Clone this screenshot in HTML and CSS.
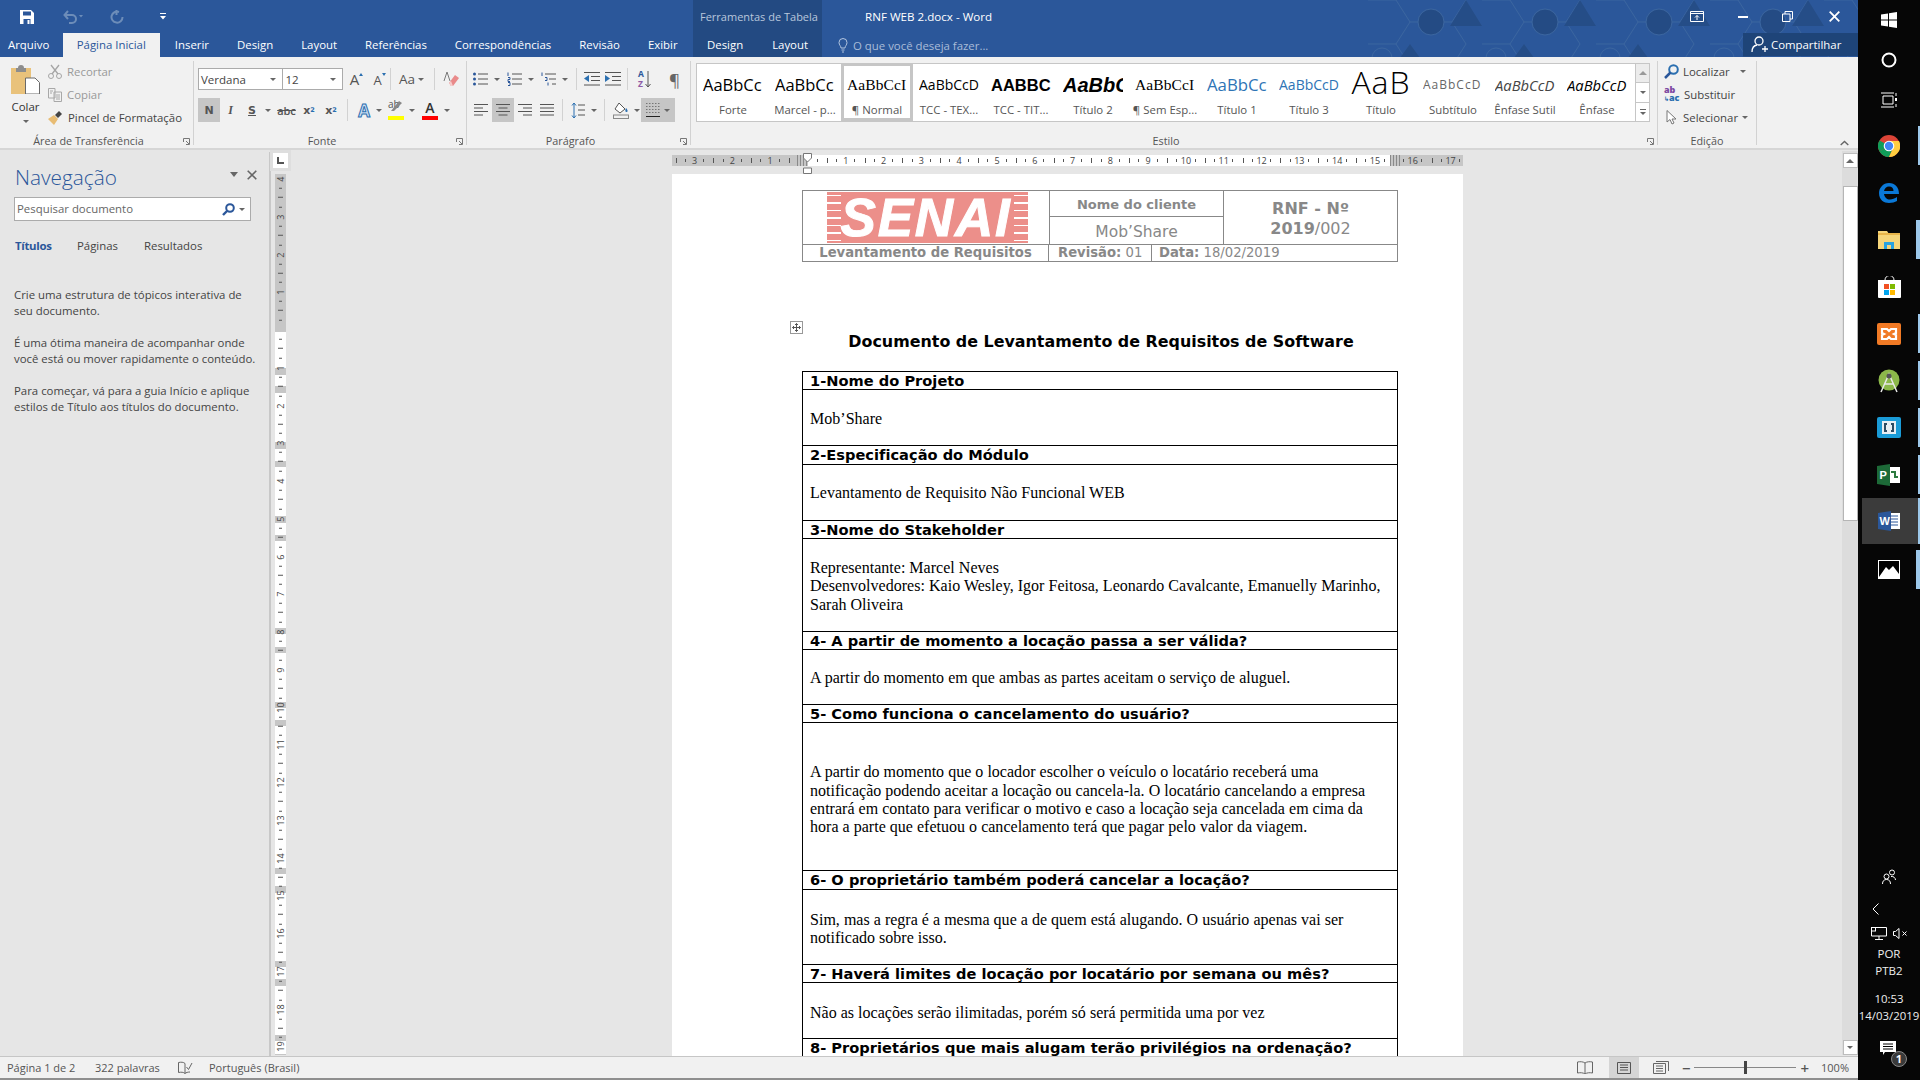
FILE: index.html
```html
<!DOCTYPE html>
<html lang="pt-BR">
<head>
<meta charset="utf-8">
<title>RNF WEB 2.docx - Word</title>
<link rel="stylesheet" href="styles.css">
</head>
<body>
<div class="app">
<div class="main">
  <header class="titlebar">
    <svg class="pattern" width="490" height="57"><defs><pattern id="hx" width="114" height="66" patternUnits="userSpaceOnUse"><path d="M0 0L28 0L42 22L28 44L0 44M28 0L42-22M42 22L84 22L98 0M84 22L98 44L84 66M28 44L42 66" fill="none" stroke="#3a659f" stroke-width="1"/><circle cx="63" cy="22" r="13" fill="#244b84" stroke="#3a659f"/><path d="M98 0L114 26L82 26Z" fill="#254d87"/><circle cx="14" cy="58" r="10" fill="none" stroke="#3a659f"/><path d="M42 44L58 66L26 66Z" fill="#254d87"/></pattern></defs><rect width="490" height="57" fill="url(#hx)"/></svg>
    <div class="tb-row1">
      <div class="qat">
        <svg class="q-save" width="14" height="14" viewBox="0 0 14 14"><path d="M0 0H11L14 3V14H0Z" fill="#fff"/><rect x="3" y="1.500" width="8" height="4" fill="#2b579a"/><rect x="3.500" y="9" width="7" height="5" fill="#2b579a"/><rect x="7.500" y="10" width="2" height="4" fill="#fff"/></svg>
        <svg class="q-undo" width="20" height="14" viewBox="0 0 20 14"><path d="M2 5H9A4 4 0 0 1 9 13H6M5 1L1.500 5L5 9" fill="none" stroke="#6d8db9" stroke-width="2"/><path d="M16 5H20L18 7.500Z" fill="#6d8db9"/></svg>
        <svg class="q-redo" width="14" height="15" viewBox="0 0 14 15"><path d="M9 3A5.500 5.500 0 1 0 12.500 8M6.500 1V6" fill="none" stroke="#6d8db9" stroke-width="2"/></svg>
        <svg class="q-more" width="6" height="7" viewBox="0 0 6 7"><path d="M0 0H6V1H0ZM0 3H6L3 6.500Z" fill="#fff"/></svg>
      </div>
      <div class="ctx ctx-top">Ferramentas de Tabela</div>
      <div class="doc-title">RNF WEB 2.docx - Word</div>
      <div class="winbtns">
        <svg width="14" height="11" viewBox="0 0 14 11"><path d="M.5.500H13.500V10.500H.5ZM.5 2.500H13.500M7 9V4.500M5 6.500L7 4.500L9 6.500" fill="none" stroke="#fff"/></svg>
        <svg class="w-min" width="10" height="2" viewBox="0 0 10 2"><rect width="10" height="2" fill="#fff"/></svg>
        <svg class="w-max" width="11" height="11" viewBox="0 0 11 11"><path d="M.5 3H8V10.500H.5ZM3 3V.5H10.500V8H8" fill="none" stroke="#fff"/></svg>
        <svg class="w-x" width="11" height="11" viewBox="0 0 11 11"><path d="M.7.700L10.300 10.300M10.300.700L.7 10.300" stroke="#fff" stroke-width="1.800"/></svg>
      </div>
    </div>
    <nav class="tb-row2">
      <div class="tabs">
        <span class="tab file">Arquivo</span>
        <span class="tab active">Página Inicial</span>
        <span class="tab">Inserir</span>
        <span class="tab">Design</span>
        <span class="tab">Layout</span>
        <span class="tab">Referências</span>
        <span class="tab">Correspondências</span>
        <span class="tab">Revisão</span>
        <span class="tab">Exibir</span>
      </div>
      <div class="ctx ctx-tabs"><span class="tab">Design</span><span class="tab">Layout</span></div>
      <div class="tell">
        <svg width="10" height="15" viewBox="0 0 10 15"><path d="M3 10C3 8 1 7 1 4.500A4 4 0 0 1 9 4.500C9 7 7 8 7 10ZM3.500 12H6.500M4 14H6" fill="none" stroke="#b3c5df"/></svg>
        <span>O que você deseja fazer...</span>
      </div>
      <div class="share">
        <svg width="17" height="17" viewBox="0 0 17 17"><circle cx="8" cy="5" r="4" fill="none" stroke="#fff" stroke-width="1.300"/><path d="M1 16C1 12 3 9.500 6 9M11 13H17M14 10V16" fill="none" stroke="#fff" stroke-width="1.300"/></svg>
        <span>Compartilhar</span>
      </div>
    </nav>
  </header>

  <section class="ribbon">
    <div class="group g-clip">
      <div class="g-body clip">
        <div class="paste">
          <svg width="29" height="29" viewBox="0 0 29 29"><rect y="3" width="20" height="26" fill="#e9c27b"/><path d="M5 3H7A3 3 0 0 1 13 3H15V7H5Z" fill="#8d8d8d"/><path d="M14.500 13H24L28.500 17.500V29H14.500Z" fill="#fff" stroke="#6a6a6a"/></svg>
          <span class="paste-l">Colar</span>
          <i class="car"></i>
        </div>
        <div class="clip-list">
          <div class="cl dis"><svg width="14" height="15" viewBox="0 0 14 15"><path d="M3 1L10 10M11 1L4 10" stroke="#a5a5a5" stroke-width="1.300"/><circle cx="3" cy="12" r="2.500" fill="none" stroke="#a5a5a5"/><circle cx="11" cy="12" r="2.500" fill="none" stroke="#a5a5a5"/></svg><span>Recortar</span></div>
          <div class="cl dis"><svg width="14" height="14" viewBox="0 0 14 14"><path d="M.5.500H7V10H.5ZM6 4H13.500V13.500H6ZM8 7H12M8 9H12M8 11H12M2 3H5M2 5H4" fill="#f1f1f1" stroke="#a8a8a8"/></svg><span>Copiar</span></div>
          <div class="cl"><svg width="15" height="15" viewBox="0 0 15 15"><path d="M0 9L6 5L10 9L6 15Z" fill="#e8bc73"/><path d="M7 5L11 1L14 4L10 8Z" fill="#444"/></svg><span>Pincel de Formatação</span></div>
        </div>
      </div>
      <div class="g-label">Área de Transferência<svg class="launch" width="7" height="7" viewBox="0 0 7 7"><path d="M.5 4V.5H6.500V6.500H3M3 3L6 6" fill="none" stroke="#777"/></svg></div>
    </div>

    <div class="group g-font">
      <div class="g-body rows">
        <div class="row">
          <div class="select s-font"><span>Verdana</span><i class="car"></i></div>
          <div class="select s-size"><span>12</span><i class="car"></i></div>
          <span class="ib w23 big">A<i class="up"></i></span>
          <span class="ib w23 mid">A<i class="dn"></i></span>
          <i class="vsep"></i>
          <span class="ib w41 aa">Aa<i class="car"></i></span>
          <i class="vsep"></i>
          <span class="ib w30"><svg width="16" height="17" viewBox="0 0 16 17"><path d="M4 1L1 10M4 1L7 10" fill="none" stroke="#7a7a7a"/><path d="M6 12L12 4L16 7L10 15H8Z" fill="#e98a8a"/><path d="M6 12L8 15H10L8 10Z" fill="#f6cccc"/></svg></span>
        </div>
        <div class="row">
          <span class="ib w22 on fb">N</span>
          <span class="ib w21 fi">I</span>
          <span class="ib w22 fu">S</span><i class="car c10"></i>
          <span class="ib w23 fabc">abc</span>
          <span class="ib w22 fb">x<sub>2</sub></span>
          <span class="ib w22 fb">x<sup>2</sup></span>
          <i class="vsep v4"></i>
          <span class="ib w22 fa-blue">A</span><i class="car c6"></i>
          <span class="ib w24"><span class="hl"><em>ab</em><svg width="16" height="14" viewBox="0 0 16 14"><path d="M3 11L11 1L14 3L6 11Z" fill="#888"/></svg></span></span><i class="car c6"></i>
          <span class="ib w26"><span class="fc">A</span></span><i class="car c8"></i>
        </div>
      </div>
      <div class="g-label">Fonte<svg class="launch" width="7" height="7" viewBox="0 0 7 7"><path d="M.5 4V.5H6.500V6.500H3M3 3L6 6" fill="none" stroke="#777"/></svg></div>
    </div>

    <div class="group g-para">
      <div class="g-body rows">
        <div class="row">
          <span class="ib w22"><svg width="16" height="14" viewBox="0 0 16 14"><path d="M5 2H15M5 7H15M5 12H15" stroke="#555"/><circle cx="1.500" cy="2" r="1.500" fill="#2b579a"/><circle cx="1.500" cy="7" r="1.500" fill="#2b579a"/><circle cx="1.500" cy="12" r="1.500" fill="#2b579a"/></svg></span><i class="car c10"></i>
          <span class="ib w22"><svg width="16" height="14" viewBox="0 0 16 14"><path d="M5 2H15M5 7H15M5 12H15" stroke="#555"/><path d="M1 .5V4M1 5.500H3V7.500H1V9.500H3M1 10.500H3V13.500H1" fill="none" stroke="#2b579a"/></svg></span><i class="car c10"></i>
          <span class="ib w22"><svg width="16" height="14" viewBox="0 0 16 14"><path d="M4 2H15M8 7H15M11 12H15" stroke="#555"/><path d="M1 .5V4M4 5.500H6V8.500H4M7 10.500V13.500" fill="none" stroke="#2b579a"/></svg></span><i class="car c10"></i>
          <i class="vsep v-w"></i>
          <span class="ib w21"><svg width="16" height="14" viewBox="0 0 16 14"><path d="M0 .5H16M7 4.500H16M7 8.500H16M0 13H16" stroke="#555"/><path d="M0 6.500L5 3V10Z" fill="#2b6fb0"/></svg></span>
          <span class="ib w21"><svg width="16" height="14" viewBox="0 0 16 14"><path d="M0 .5H16M7 4.500H16M7 8.500H16M0 13H16" stroke="#555"/><path d="M5 6.500L0 3V10Z" fill="#2b6fb0"/></svg></span>
          <i class="vsep v-w"></i>
          <span class="ib w30 az"><span class="az-l"><b>A</b><b class="z">Z</b></span><svg width="6" height="17" viewBox="0 0 6 17"><path d="M3 0V16M.5 13L3 16L5.500 13" fill="none" stroke="#555"/></svg></span>
          <span class="ib w30 pil">¶</span>
        </div>
        <div class="row">
          <span class="ib w22"><svg width="14" height="12" viewBox="0 0 14 12"><path d="M0 .5H14M0 4H9M0 7.500H14M0 11H9" stroke="#555"/></svg></span>
          <span class="ib w22 on"><svg width="14" height="12" viewBox="0 0 14 12"><path d="M0 .5H14M2.500 4H11.500M0 7.500H14M2.500 11H11.500" stroke="#555"/></svg></span>
          <span class="ib w22"><svg width="14" height="12" viewBox="0 0 14 12"><path d="M0 .5H14M5 4H14M0 7.500H14M5 11H14" stroke="#555"/></svg></span>
          <span class="ib w22"><svg width="14" height="12" viewBox="0 0 14 12"><path d="M0 .5H14M0 4H14M0 7.500H14M0 11H14" stroke="#555"/></svg></span>
          <i class="vsep v-w"></i>
          <span class="ib w22"><svg width="14" height="17" viewBox="0 0 14 17"><path d="M7 3H14M7 8H14M7 13H14" stroke="#555"/><path d="M3 1V16M1 3.500L3 1L5 3.500M1 13.500L3 16L5 13.500" fill="none" stroke="#2b6fb0"/></svg></span><i class="car c10"></i>
          <i class="vsep v-m"></i>
          <span class="ib w26"><svg width="16" height="17" viewBox="0 0 16 17"><path d="M6 1L12 7L7 11L2 7Z" fill="#fff" stroke="#555"/><path d="M13 6C15 8 15 10 13.500 10C12 10 12 8 13 6Z" fill="#2b6fb0"/><rect x=".5" y="13" width="15" height="3.500" fill="#f1f1f1" stroke="#888"/></svg></span><i class="car c5"></i>
          <span class="ib bord on"><svg width="14" height="14" viewBox="0 0 14 14"><path d="M0 .5H14M0 3.500H14M0 6.500H14M0 9.500H14M1 0V10M4 0V10M7 0V10M10 0V10M13 0V10" stroke="#777" stroke-dasharray="1 2"/><path d="M0 13.500H14" stroke="#222"/></svg><i class="car"></i></span>
        </div>
      </div>
      <div class="g-label">Parágrafo<svg class="launch" width="7" height="7" viewBox="0 0 7 7"><path d="M.5 4V.5H6.500V6.500H3M3 3L6 6" fill="none" stroke="#777"/></svg></div>
    </div>

    <div class="group g-style">
      <div class="g-body">
        <div class="gallery">
          <div class="st"><span class="pv p-ss">AaBbCc</span><span class="lb">Forte</span></div>
          <div class="st"><span class="pv p-ss">AaBbCc</span><span class="lb">Marcel - p...</span></div>
          <div class="st sel"><span class="pv p-sf">AaBbCcI</span><span class="lb">¶ Normal</span></div>
          <div class="st"><span class="pv p-ss s13">AaBbCcD</span><span class="lb">TCC - TEX...</span></div>
          <div class="st"><span class="pv p-ss p-bold">AABBC</span><span class="lb">TCC - TIT...</span></div>
          <div class="st"><span class="pv p-ss p-t2">AaBbC</span><span class="lb">Título 2</span></div>
          <div class="st"><span class="pv p-sf">AaBbCcI</span><span class="lb">¶ Sem Esp...</span></div>
          <div class="st"><span class="pv p-ss p-t1">AaBbCc</span><span class="lb">Título 1</span></div>
          <div class="st"><span class="pv p-ss p-t3">AaBbCcD</span><span class="lb">Título 3</span></div>
          <div class="st"><span class="pv p-big">AaB</span><span class="lb">Título</span></div>
          <div class="st"><span class="pv p-ss p-sub">AaBbCcD</span><span class="lb">Subtítulo</span></div>
          <div class="st"><span class="pv p-ss p-em1">AaBbCcD</span><span class="lb">Ênfase Sutil</span></div>
          <div class="st"><span class="pv p-ss p-em2">AaBbCcD</span><span class="lb">Ênfase</span></div>
          <div class="gal-scroll">
            <span class="gs dis"><i class="tri-up"></i></span>
            <span class="gs"><i class="car"></i></span>
            <span class="gs more"><i class="bar"></i><i class="car"></i></span>
          </div>
        </div>
      </div>
      <div class="g-label">Estilo<svg class="launch" width="7" height="7" viewBox="0 0 7 7"><path d="M.5 4V.5H6.500V6.500H3M3 3L6 6" fill="none" stroke="#777"/></svg></div>
    </div>

    <div class="group g-edit">
      <div class="g-body edit">
        <div class="cl"><svg width="15" height="15" viewBox="0 0 15 15"><circle cx="9.500" cy="5.500" r="4.300" fill="none" stroke="#2b6fb0" stroke-width="2"/><path d="M1 14L6.500 8.500" stroke="#2b579a" stroke-width="2.500"/></svg><span>Localizar</span><i class="car c-l"></i></div>
        <div class="cl"><span class="abac"><b class="ab1">ab</b><b class="ac1"><u>↳</u>ac</b></span><span>Substituir</span></div>
        <div class="cl"><svg width="15" height="15" viewBox="0 0 15 15"><path d="M3 .5V12L6 9.500L8 14L10 13L8 9H12Z" fill="#fff" stroke="#777"/></svg><span>Selecionar</span><i class="car"></i></div>
      </div>
      <div class="g-label g-last">Edição</div>
    </div>
    <div class="collapse"><svg width="9" height="6" viewBox="0 0 9 6"><path d="M.7 5L4.500 1.500L8.300 5" fill="none" stroke="#666" stroke-width="1.400"/></svg></div>
  </section>

  <div class="work">
    <aside class="navpane">
      <div class="nav-head">
        <h1>Navegação</h1>
        <i class="nav-drop"></i>
        <svg width="10" height="10" viewBox="0 0 10 10"><path d="M.7.700L9.300 9.300M9.300.700L.7 9.300" stroke="#666" stroke-width="1.600"/></svg>
      </div>
      <div class="search">
        <span>Pesquisar documento</span>
        <svg width="13" height="13" viewBox="0 0 13 13"><circle cx="8" cy="5" r="3.800" fill="none" stroke="#2b579a" stroke-width="2"/><path d="M1 12L5 8" stroke="#2b579a" stroke-width="2.400"/></svg>
        <i class="car"></i>
      </div>
      <div class="nav-tabs"><span class="nt cur">Títulos</span><span class="nt">Páginas</span><span class="nt">Resultados</span></div>
      <p>Crie uma estrutura de tópicos interativa de seu documento.</p>
      <p>É uma ótima maneira de acompanhar onde você está ou mover rapidamente o conteúdo.</p>
      <p>Para começar, vá para a guia Início e aplique estilos de Título aos títulos do documento.</p>
    </aside>

    <div class="vcol">
      <div class="tabsel"><svg width="7" height="7" viewBox="0 0 7 7"><path d="M1 0V6H7" fill="none" stroke="#555" stroke-width="2"/></svg></div>
      <div class="vruler">
        <div class="vr-inner">
          <span class="vc">4</span><span class="vc">3</span><span class="vc">2</span><span class="vc">1</span><span class="vc"></span><span class="vc">1</span><span class="vc">2</span><span class="vc">3</span><span class="vc">4</span><span class="vc">5</span><span class="vc">6</span><span class="vc">7</span><span class="vc">8</span><span class="vc">9</span><span class="vc">10</span><span class="vc">11</span><span class="vc">12</span><span class="vc">13</span><span class="vc">14</span><span class="vc">15</span><span class="vc">16</span><span class="vc">17</span><span class="vc">18</span><span class="vc">19</span>
        </div>
      </div>
    </div>

    <div class="docarea">
      <div class="hruler">
        <span class="hc">3</span><span class="hc">2</span><span class="hc">1</span><span class="hc"></span><span class="hc">1</span><span class="hc">2</span><span class="hc">3</span><span class="hc">4</span><span class="hc">5</span><span class="hc">6</span><span class="hc">7</span><span class="hc">8</span><span class="hc">9</span><span class="hc">10</span><span class="hc">11</span><span class="hc">12</span><span class="hc">13</span><span class="hc">14</span><span class="hc">15</span><span class="hc">16</span><span class="hc">17</span>
        <i class="colmark cm1"></i><i class="colmark cm2"></i>
        <svg class="indent" width="9" height="21" viewBox="0 0 9 21"><path d="M.5.500H8.500V5L4.500 9L.5 5Z" fill="#fff" stroke="#777"/><path d="M.5 15H8.500V20.500H.5Z" fill="#fff" stroke="#777"/></svg>
      </div>
      <div class="page">
        <table class="hdr">
          <tr>
            <td class="logo-cell" rowspan="2">
              <div class="logo"><i class="st-l"></i><span>SENAI</span><i class="st-r"></i></div>
            </td>
            <td class="c-name">Nome do cliente</td>
            <td class="c-rnf" rowspan="2"><b>RNF - Nº</b><br><b>2019</b>/002</td>
          </tr>
          <tr><td class="c-mob">Mob’Share</td></tr>
        </table>
        <div class="hdr2">
          <div class="h2a">Levantamento de Requisitos</div>
          <div class="h2b"><b>Revisão:</b> 01</div>
          <div class="h2c"><b>Data:</b> 18/02/2019</div>
        </div>
        <h2 class="doc-h">Documento de Levantamento de Requisitos de Software</h2>
        <div class="tbl-wrap">
          <svg class="move" width="13" height="13" viewBox="0 0 13 13"><rect x=".5" y=".5" width="12" height="12" fill="#fff" stroke="#999"/><path d="M6.500 2.500V10.500M2.500 6.500H10.500M5 4L6.500 2.500L8 4M5 9L6.500 10.500L8 9M4 5L2.500 6.500L4 8M9 5L10.500 6.500L9 8" fill="none" stroke="#555"/></svg>
          <table class="req">
            <tr><th>1-Nome do Projeto</th></tr>
            <tr><td class="r56">Mob’Share</td></tr>
            <tr><th>2-Especificação do Módulo</th></tr>
            <tr><td class="r56">Levantamento de Requisito Não Funcional WEB</td></tr>
            <tr><th>3-Nome do Stakeholder</th></tr>
            <tr><td class="r93">Representante: Marcel Neves<br>Desenvolvedores: Kaio Wesley, Igor Feitosa, Leonardo Cavalcante, Emanuelly Marinho, Sarah Oliveira</td></tr>
            <tr><th>4- A partir de momento a locação passa a ser válida?</th></tr>
            <tr><td class="r55">A partir do momento em que ambas as partes aceitam o serviço de aluguel.</td></tr>
            <tr><th>5- Como funciona o cancelamento do usuário?</th></tr>
            <tr><td class="r148">A partir do momento que o locador escolher o veículo o locatário receberá uma notificação podendo aceitar a locação ou cancela-la. O locatário cancelando a empresa entrará em contato para verificar o motivo e caso a locação seja cancelada em cima da hora a parte que efetuou o cancelamento terá que pagar pelo valor da viagem.</td></tr>
            <tr><th>6- O proprietário também poderá cancelar a locação?</th></tr>
            <tr><td class="r75">Sim, mas a regra é a mesma que a de quem está alugando. O usuário apenas vai ser notificado sobre isso.</td></tr>
            <tr><th>7- Haverá limites de locação por locatário por semana ou mês?</th></tr>
            <tr><td class="r56 r-low">Não as locações serão ilimitadas, porém só será permitida uma por vez</td></tr>
            <tr><th>8- Proprietários que mais alugam terão privilégios na ordenação?</th></tr>
          </table>
        </div>
      </div>
    </div>

    <div class="vscroll">
      <span class="sb-btn"><i class="tri-up"></i></span>
      <span class="sb-thumb"></span>
      <span class="sb-btn sb-dn"><i class="car"></i></span>
    </div>
  </div>

  <footer class="status">
    <span class="s1">Página 1 de 2</span>
    <span class="s2">322 palavras</span>
    <svg class="s3" width="15" height="14" viewBox="0 0 15 14"><path d="M7 2.500C5.500 1 3 1 .5 1.500V11.500C3 11 5.500 11 7 12.500V2.500ZM7 12.500C8 11.500 10 11 12 11M8.500 6L10.500 8.500L14 2" fill="none" stroke="#666"/></svg>
    <span class="s4">Português (Brasil)</span>
    <div class="s-right">
      <svg width="16" height="13" viewBox="0 0 16 13"><path d="M8 2C6 .5 3 .5 .5 1V12C3 11.500 6 11.500 8 13C10 11.500 13 11.500 15.500 12V1C13 .5 10 .5 8 2ZM8 2V13" fill="none" stroke="#666"/></svg>
      <span class="view-on"><svg width="14" height="12" viewBox="0 0 14 12"><path d="M.5.500H13.500V11.500H.5ZM3 3H11M3 5.500H11M3 8H11" fill="none" stroke="#555"/></svg></span>
      <svg width="16" height="13" viewBox="0 0 16 13"><path d="M.5 2.500H12.500V12.500H.5ZM3 .5H15.500V10M3 5H10M3 7.500H10M3 10H10" fill="none" stroke="#666"/></svg>
      <span class="zm zm-m">−</span>
      <span class="slider"><i></i></span>
      <span class="zm">+</span>
      <span class="pct">100%</span>
    </div>
  </footer>
  <div class="bottomline"></div>
</div>

<aside class="taskbar">
  <span class="ti t39"><svg width="16" height="16" viewBox="0 0 16 16"><path d="M0 2.500L7 1.500V7.500H0ZM8 1.300L16 0V7.500H8ZM0 8.500H7V14.500L0 13.500ZM8 8.500H16V16L8 14.700Z" fill="#fff"/></svg></span>
  <span class="ti t39"><svg width="16" height="16" viewBox="0 0 16 16"><circle cx="8" cy="8" r="6.500" fill="none" stroke="#fff" stroke-width="2"/></svg></span>
  <span class="ti t40"><svg width="16" height="16" viewBox="0 0 16 16"><path d="M0 1H13M0 15H13M2 4H12V12H2ZM15 1V4M15 12V15" fill="none" stroke="#fff"/><rect x="14" y="6" width="2" height="3" fill="#fff"/></svg></span>
  <span class="ti t47 run"><svg width="22" height="22" viewBox="0 0 22 22"><circle cx="11" cy="11" r="11" fill="#db4437"/><path d="M11 11L1.500 16.500A11 11 0 0 1 1.500 5.500L6 8Z" fill="#0f9d58"/><path d="M11 11L1.500 16.500A11 11 0 0 0 11 22L16 11Z" fill="#0f9d58"/><path d="M11 6H21A11 11 0 0 1 11 22L16 11Z" fill="#ffcd40"/><circle cx="11" cy="11" r="5.300" fill="#fff"/><circle cx="11" cy="11" r="4.200" fill="#4285f4"/></svg></span>
  <span class="ti t47"><svg width="20" height="20" viewBox="0 0 20 20"><path d="M5 11H20C20 4 16 0 10 0C4 0 0 5 0 10C0 17 5 20 10 20C13 20 16 19 18 18V14C16 15.500 13 16.500 11 16.500C8 16.500 5.500 14.500 5 11ZM5 8C5.500 5.500 7.500 3.500 10 3.500C13 3.500 14.500 5.500 14.500 8Z" fill="#0a78d7"/></svg></span>
  <span class="ti t47 run2"><svg width="22" height="18" viewBox="0 0 22 18"><path d="M0 0H9L11 3H22V18H0Z" fill="#f6d67a"/><path d="M0 2H22V4H0Z" fill="#e8b54a"/><path d="M6 18V11H16V18H13V14H9V18Z" fill="#29a3e0"/></svg></span>
  <span class="ti t47"><svg width="23" height="22" viewBox="0 0 23 22"><path d="M7 4A4 4 0 0 1 16 4" fill="none" stroke="#fff"/><path d="M0 4H23V21A1 1 0 0 1 22 22H1A1 1 0 0 1 0 21Z" fill="#fff"/><rect x="6" y="8" width="5" height="5" fill="#f25022"/><rect x="12" y="8" width="5" height="5" fill="#7fba00"/><rect x="6" y="14" width="5" height="5" fill="#00a4ef"/><rect x="12" y="14" width="5" height="5" fill="#ffb900"/></svg></span>
  <span class="ti t47 run"><svg width="24" height="22" viewBox="0 0 24 22"><rect width="24" height="22" rx="2" fill="#f17a25"/><path d="M5 6H10L12 8L14 6H19V10L17 11L19 12V16H14L12 14L10 16H5V12L7 11L5 10Z" fill="none" stroke="#fff" stroke-width="2.200"/></svg></span>
  <span class="ti t47 run"><svg width="22" height="24" viewBox="0 0 22 24"><circle cx="11" cy="11" r="10.500" fill="#8cb84a"/><path d="M3 23L11 5L19 23M6 15H16" fill="none" stroke="#e8e8e8" stroke-width="1.500"/><circle cx="11" cy="7" r="2.500" fill="#555"/></svg></span>
  <span class="ti t47 run"><svg width="24" height="21" viewBox="0 0 24 21"><rect width="24" height="21" rx="2" fill="#1a9bd7"/><path d="M5 4H19V17H5Z" fill="#e7eef3"/><path d="M10 7H8V14H10M14 7H16V14H14" fill="none" stroke="#2c4b63" stroke-width="2"/></svg></span>
  <span class="ti t47 run"><svg width="24" height="22" viewBox="0 0 24 22"><path d="M12 3H23V19H12Z" fill="#fff"/><path d="M14 8H18V13H21" fill="none" stroke="#2c7a3f" stroke-width="2"/><path d="M0 2L13 0V22L0 20Z" fill="#1d6a38"/><text x="2.500" y="15" class="svg-p">P</text></svg></span>
  <span class="ti t46 act"><svg width="22" height="20" viewBox="0 0 22 20"><path d="M10 2H22V18H10Z" fill="#fff"/><path d="M13 5H20M13 8H20M13 11H20M13 14H20" stroke="#2b579a"/><path d="M0 2L13 0V20L0 18Z" fill="#2b579a"/><text x="1.500" y="13.500" class="svg-w">W</text></svg></span>
  <span class="ti t47 run2 t-last"><svg width="22" height="19" viewBox="0 0 22 19"><rect x=".5" y=".5" width="21" height="18" fill="#000" stroke="#fff"/><path d="M1 17L8 7L11 10L15 6L21 14V18H1Z" fill="#fff"/></svg></span>
  <div class="tray">
    <svg class="tr-people" width="14" height="16" viewBox="0 0 14 16"><circle cx="10" cy="3.500" r="2.500" fill="none" stroke="#fff"/><circle cx="4.500" cy="7.500" r="2.500" fill="none" stroke="#fff"/><path d="M.5 15C.5 12 2 10.500 4.500 10.500C7 10.500 8.500 12 8.500 15M9 7.500C11.500 7 13.500 9 13.500 11" fill="none" stroke="#fff"/></svg>
    <svg class="tr-chev" width="7" height="12" viewBox="0 0 7 12"><path d="M6.500.5L1 6L6.500 11.500" fill="none" stroke="#fff"/></svg>
    <div class="tr-net">
      <svg width="16" height="13" viewBox="0 0 16 13"><path d="M3 .5H15.500V9H.5V4M8 9V12M4 12.500H12" fill="none" stroke="#fff"/><rect x=".5" y=".5" width="4" height="3.500" fill="none" stroke="#fff"/></svg>
      <svg width="15" height="11" viewBox="0 0 15 11"><path d="M.5 3.500H2.500L6 .5V10.500L2.500 7.500H.5ZM9.500 3.500L13.500 7.500M13.500 3.500L9.500 7.500" fill="none" stroke="#fff"/></svg>
    </div>
    <div class="tr-txt lang">POR<br>PTB2</div>
    <div class="tr-txt date">10:53<br>14/03/2019</div>
    <div class="tr-note">
      <svg width="16" height="14" viewBox="0 0 16 14"><path d="M0 0H16V11H5L3 14V11H0Z" fill="#fff"/><path d="M3 3H13M3 5.500H13M3 8H13" stroke="#000"/></svg>
      <span class="badge">1</span>
    </div>
  </div>
</aside>
</div>
</body>
</html>
```
FILE: styles.css
```css
*{box-sizing:border-box}
html,body{margin:0;height:100%;overflow:hidden}
body{font-family:"Open Sans","Noto Sans",sans-serif;font-size:11.4px;color:#444}
i{display:block;font-style:normal}
p,h1,h2{margin:0}
.app{display:flex;width:1920px;height:1080px}
.main{width:1858px;display:flex;flex-direction:column;background:#e6e6e6}

/* title bar */
.titlebar{position:relative;height:57px;background:#2b579a;color:#fff;flex:none}
.pattern{position:absolute;right:0;top:0}
.tb-row1{position:relative;display:flex;height:33px;align-items:center}
.qat{width:693px;display:flex;align-items:center;padding-left:20px}
.q-undo{margin-left:29px}.q-redo{margin-left:27px}.q-more{margin-left:36px}
.ctx{background:#234a82;width:129px;flex:none}
.ctx-top{height:33px;padding-left:7px;line-height:34px;color:#b9c7dc;font-size:11px;white-space:nowrap}
.doc-title{margin-left:43px;font-size:11.6px;white-space:nowrap}
.winbtns{margin-left:auto;display:flex;align-items:center;padding-right:18px}
.w-min{margin-left:34px}.w-max{margin-left:34px}.w-x{margin-left:36px}
.tb-row2{position:relative;display:flex;height:24px;align-items:stretch}
.tabs{display:flex;width:693px;flex:none}
.tab{padding:0 14px;line-height:24px;white-space:nowrap}
.file{padding:0 8px;margin-right:5.500px}
.active{background:#f1f1f1;color:#2b579a;padding:0 14px;margin-right:1px}
.ctx-tabs{display:flex}
.ctx-tabs .tab{padding:0 0 0 14px}
.ctx-tabs .tab+.tab{padding-left:29px}
.tell{display:flex;align-items:center;gap:5px;margin-left:16px;color:#a9bcd8}
.share{margin-left:auto;width:115px;background:#1e4478;display:flex;align-items:center;gap:3px;padding-left:8px;margin-bottom:1px}

/* ribbon */
.ribbon{display:flex;height:93px;flex:none;background:#f1f1f1;padding-top:4px;border-bottom:2px solid #d6d6d6;position:relative}
.group{display:flex;flex-direction:column;height:84px;border-right:1px solid #d2d2d2;position:relative;flex:none}
.g-clip{width:194px}.g-font{width:273px}.g-para{width:224px}.g-style{width:967px}.g-edit{width:99px}
.g-body{height:73px;flex:none}
.g-label{height:11px;padding-right:16px;text-align:center;line-height:14px;font-size:10.800px;color:#555}
.g-last{padding-right:0}
.launch{position:absolute;right:3px;bottom:0}
.car{width:0;height:0;border:3px solid transparent;border-top:3.500px solid #666;border-bottom:0;flex:none;display:block}
.clip{display:flex}
.paste{width:48px;display:flex;flex-direction:column;align-items:center;padding:4px 0 0 3px}
.paste-l{margin-top:5px;color:#333}
.paste .car{margin-top:6px}
.clip-list{display:flex;flex-direction:column;white-space:nowrap;margin-top:-1px}
.cl{height:23px;flex:none;display:flex;align-items:center;gap:5px;color:#444}
.cl svg{flex:none}
.dis{color:#999}
.rows{padding:7px 0 0 4px;display:flex;flex-direction:column;gap:9px}
.g-para .rows{padding-left:3px}
.row{display:flex;align-items:center;height:22px}
.select{height:22px;background:#fff;border:1px solid #ababab;display:flex;align-items:center;justify-content:space-between;padding:0 6px 0 2px;font-size:11.500px}
.s-font{width:85px;border-right:0}.s-size{width:61px}
.ib{display:flex;align-items:center;justify-content:center;height:24px;position:relative;flex:none;color:#555}
.w21{width:21px}.w22{width:22px}.w23{width:23px}.w24{width:24px}.w26{width:26px}.w30{width:30px}.w41{width:41px}
.on{background:#c6c6c6}
.vsep{width:1px;height:22px;background:#d2d2d2;flex:none;margin:0 1px}
.v4{margin:0 5px}
.v-w{margin:0 4px}
.v-m{margin:0 3px}
.c10{margin:0 4px 0 2px}.c8{margin:0 3px 0 1px}.c6{margin:0 2px 0 1px}.c5{margin:0 1px 0 0}
.big{font-size:15px}.mid{font-size:13px;padding-top:1px}
.up,.dn{position:absolute;top:6px;right:3px;border:2.500px solid transparent;width:0;height:0}
.up{border-bottom:3px solid #2b6fb0;border-top:0}.dn{border-top:3px solid #2b6fb0;border-bottom:0}
.aa{gap:3px;font-size:13.500px;justify-content:flex-start;padding-left:7px}
.fb{font-family:"DejaVu Sans",sans-serif;font-weight:700;font-size:11px}
.fb sub,.fb sup{font-size:6.500px;color:#2b6fb0;line-height:0}
.fi{font:italic 700 12px "Liberation Serif",serif}
.fu{font-family:"DejaVu Sans",sans-serif;font-weight:700;font-size:11px;text-decoration:underline}
.fabc{font-size:11px;text-decoration:line-through;font-weight:600}
.fa-blue{font-size:17px;color:#cfe0f2;-webkit-text-stroke:1px #2b6fb0;font-weight:700}
.hl{position:relative;display:block;width:16px;height:20px;border-bottom:4px solid #ff0;font-size:10px;line-height:9px}
.hl em{font-style:normal;position:absolute;left:0;top:0}
.hl svg{position:absolute;left:0;top:0}
.fc{display:block;font-size:14px;font-weight:600;line-height:16px;width:16px;text-align:center;border-bottom:4px solid #f00;color:#333}
.az{justify-content:flex-start;gap:1px;padding-left:6px}
.az-l{display:flex;flex-direction:column;font-size:8.500px;line-height:10px;color:#2b579a}
.z{color:#8e5ba6}
.pil{font-size:17px;color:#666;justify-content:flex-start;padding-left:7px}
.bord{width:34px;gap:4px}
.gallery{margin:2px 0 0 5px;width:953px;height:59px;background:#fff;border:1px solid #c6c6c6;border-right:0;display:flex;position:relative}
.st{width:72px;height:57px;flex:none;display:flex;flex-direction:column;align-items:center;padding-top:2px;white-space:nowrap;overflow:hidden;border:3px solid transparent;border-top-width:2px}
.sel{border-color:#c6c6c6}
.pv{height:33px;line-height:34px;width:60px;overflow:hidden;text-align:left;color:#000;flex:none}
.lb{color:#555;line-height:17px}
.p-ss{font-family:"Open Sans",sans-serif;font-size:16.500px;letter-spacing:0}
.p-sf{font-family:"Liberation Serif",serif;font-size:15.500px;letter-spacing:.1px}
.s13{font-size:14px}
.p-bold{font-family:"Liberation Sans",sans-serif;font-weight:700;font-size:16.500px}
.p-t2{font-family:"Liberation Sans",sans-serif;font-weight:700;font-style:italic;font-size:20px}
.p-t1{font-size:16.800px;color:#2e74b5}
.p-t3{font-size:14px;color:#2e74b5}
.p-big{font:300 32px/28px "Open Sans",sans-serif;color:#000;height:27px;margin-bottom:6px;letter-spacing:1px;text-align:center;width:62px}
.p-sub{font-size:12px;color:#666;letter-spacing:1px}
.p-em1{font-style:italic;font-size:14.800px;color:#444}
.p-em2{font-style:italic;font-size:14.800px;color:#000}
.gal-scroll{position:absolute;right:-1px;top:-1px;width:15px;height:59px;display:flex;flex-direction:column;border:1px solid #c6c6c6;background:#fff}
.gs{flex:1;display:flex;flex-direction:column;align-items:center;justify-content:center;border-bottom:1px solid #c6c6c6;gap:2px}
.gs:last-child{border-bottom:0}
.gs.dis{background:#ececec}
.tri-up{width:0;height:0;border:4px solid transparent;border-bottom:4px solid #999;border-top:0}
.gs .bar{width:6px;height:1px;background:#666}
.edit{padding:0 0 0 6px;margin-top:-1px;white-space:nowrap;height:74px}
.edit .cl{gap:4px}
.abac{display:block;width:16px;font-size:9px;line-height:8px;font-weight:700}
.ab1{color:#7d4aa2;display:block}.ac1{color:#2b6fb0;display:block;white-space:nowrap}.ac1 u{text-decoration:none;font-size:6px}
.c-l{margin-left:6px}
.collapse{margin:73px 0 0 83px}

/* workspace */
.work{flex:1;display:flex;min-height:0}
.navpane{width:271px;flex:none;border-right:2px solid #c8c8c8;padding:0 0 0 14px;margin-top:2px;font-size:11.400px;color:#444;line-height:16px}
.nav-head{display:flex;align-items:center;height:45px;padding-right:12px}
.nav-head h1{font:300 20.800px/50px "Open Sans",sans-serif;height:45px;color:#2b579a;margin-left:1px;flex:1}
.nav-drop{width:0;height:0;border:4.500px solid transparent;border-top:5px solid #666;border-bottom:0;margin-right:9px}
.search{width:237px;height:24px;background:#fff;border:1px solid #ababab;display:flex;align-items:center;padding:0 5px 0 2px;color:#666;white-space:nowrap;margin-bottom:17px}
.search span{flex:1}
.search svg{margin-right:4px}
.nav-tabs{display:flex;height:16px;margin-bottom:33px;gap:0}
.nt{margin-left:1px;width:61px}
.nt+.nt{width:66px}
.cur{font-weight:700;color:#2b579a;letter-spacing:-.3px}
.navpane p{width:243px;margin-bottom:16px}
.vcol{width:19px;flex:none;display:flex;flex-direction:column;align-items:center}
.tabsel{width:21px;height:21px;background:#fff;display:flex;align-items:center;justify-content:center;flex:none;border:3px solid #dedede}
.vruler{width:11px;height:881px;margin:3px 0 0 0;overflow:hidden;flex:none;
 background:linear-gradient(#c6c6c6 0 158px,#fff 158px 194px,#c6c6c6 194px 201px,#fff 201px 212px,#c6c6c6 212px 219px,#fff 219px 268px,#c6c6c6 268px 275px,#fff 275px 287px,#c6c6c6 287px 293px,#fff 293px 342px,#c6c6c6 342px 349px,#fff 349px 361px,#c6c6c6 361px 367px,#fff 367px 454px,#c6c6c6 454px 460px,#fff 460px 473px,#c6c6c6 473px 479px,#fff 479px 528px,#c6c6c6 528px 534px,#fff 534px 546px,#c6c6c6 546px 552px,#fff 552px 694px,#c6c6c6 694px 700px,#fff 700px 712px,#c6c6c6 712px 719px,#fff 719px 787px,#c6c6c6 787px 793px,#fff 793px 805px,#c6c6c6 805px 812px,#fff 812px 861px,#c6c6c6 861px 867px,#fff 867px 880px,#c6c6c6 880px)}
.vr-inner{margin-top:-14px;display:flex;flex-direction:column}
.vc{height:37.750px;flex:none;display:flex;align-items:center;justify-content:center;font-size:9px;line-height:11px;color:#444;writing-mode:vertical-rl;transform:rotate(180deg);
 background:linear-gradient(#555,#555) 50% 25%/3px 1px no-repeat,linear-gradient(#555,#555) 50% 75%/3px 1px no-repeat,linear-gradient(#555,#555) 50% 0/5px 1px no-repeat}
.docarea{flex:1;min-width:0;display:flex;flex-direction:column;padding-left:382px;overflow:hidden}
.hruler{position:relative;flex:none;width:791px;height:11px;margin:5px 0 8px;padding-left:3.700px;display:flex;background:linear-gradient(90deg,#c6c6c6 0 130px,#fff 130px 724px,#c6c6c6 724px)}
.hc{width:37.800px;flex:none;text-align:center;font-size:9px;line-height:11px;color:#444;
 background:linear-gradient(#555,#555) 25% 50%/1px 3px no-repeat,linear-gradient(#555,#555) 75% 50%/1px 3px no-repeat,linear-gradient(#555,#555) 0 50%/1px 5px no-repeat}
.colmark{position:absolute;top:0;width:11px;height:11px;background:repeating-linear-gradient(90deg,#8a8a8a 0 1px,#c6c6c6 1px 3px)}
.cm1{left:125px}.cm2{left:718px}
.indent{position:absolute;left:131px;top:-2px}
.page{width:791px;flex:1;background:#fff;padding:16px 60px 0 130px;overflow:hidden;min-height:0;position:relative}

.hdr{width:596px;height:53px;border-collapse:collapse;table-layout:fixed;font-family:"DejaVu Sans",Verdana,sans-serif;color:#888}
.hdr td{border:1px solid #888;padding:0;text-align:center}
.logo-cell{width:247px}
.c-name{width:174px;height:26px;font-weight:700;font-size:13px;padding-top:2px!important}
.c-mob{font-size:15.500px;line-height:24px;font-weight:400;color:#888;padding-top:3px!important}
.c-rnf{font-size:16px;line-height:20px;padding-top:3px!important}
.logo{width:201px;height:51px;margin-left:24px;background:#ec8f8a;display:flex;align-items:center;justify-content:space-between}
.logo span{font:italic 700 53px/51px "Liberation Sans",sans-serif;color:#fff;letter-spacing:1.800px;-webkit-text-stroke:1px #fff;margin-left:-3px}
.st-l,.st-r{width:14px;height:46px;flex:none;background:repeating-linear-gradient(#fff 0 1.500px,transparent 1.500px 7.500px)}
.hdr2{display:flex;width:596px;height:17px;border:1px solid #888;border-top:0;font:13.200px/16px "DejaVu Sans",Verdana,sans-serif;color:#888;white-space:nowrap}
.h2a{width:246px;text-align:center;font-weight:700;border-right:1px solid #888}
.h2b{width:103px;padding-left:9px;border-right:1px solid #888}
.h2c{padding-left:7px}
.doc-h{margin:69px 0 0;padding-right:3px;text-align:center;font:700 15.900px/22px "DejaVu Sans",Verdana,sans-serif;color:#000;height:40px;white-space:nowrap}
.tbl-wrap{position:relative}
.move{position:absolute;left:-12px;top:-50px}
.req{width:596px;border-collapse:collapse;table-layout:fixed;font:16px/18.400px "Liberation Serif",serif;letter-spacing:.02px;color:#000}
.req th,.req td{border:1px solid #000;padding:3px 7px 0;text-align:left}
.req th{font:700 14.600px/17.300px "DejaVu Sans",Verdana,sans-serif;height:18px;padding:0 7px;white-space:nowrap}
.req .r148{padding-top:6px}
.req .r75{padding-top:5px}
.req .r-low{padding-top:6px}
.r55{height:55px}.r56{height:56px}.r75{height:75px}.r93{height:93px}.r148{height:148px}

.vscroll{width:16px;flex:none;background:#dcdcdc;display:flex;flex-direction:column;align-items:center;padding-top:2px;margin-top:1px;margin-bottom:1px}
.sb-btn{width:15px;height:15px;background:#fff;border:1px solid #bdbdbd;display:flex;align-items:center;justify-content:center;flex:none}
.sb-btn .tri-up{border-width:4px;border-bottom-color:#666;border-top:0}
.sb-thumb{width:15px;height:335px;margin-top:18px;background:#fff;border:1px solid #b5b5b5;flex:none}
.sb-dn{margin-top:auto}

/* status */
.status{height:22px;flex:none;background:#f1f1f1;border-top:1px solid #c6c6c6;display:flex;align-items:center;font-size:11px;color:#555;white-space:nowrap}
.s1{margin-left:7px;width:88px}.s2{width:83px}.s3{margin-right:16px}
.s-right{margin-left:auto;display:flex;align-items:center;padding-right:9px}
.view-on{width:30px;height:21px;background:#d5d5d5;display:flex;align-items:center;justify-content:center;margin:0 14px 0 16px}
.zm{font-size:15px;font-weight:600;line-height:14px;color:#555}
.zm-m{margin-left:13px}
.slider{display:block;width:102px;height:1px;background:#888;position:relative;margin:0 4px}
.slider i{position:absolute;left:50px;top:-6px;width:3px;height:13px;background:#444}
.pct{margin-left:12px}
.bottomline{height:2px;flex:none;background:#8f8f8f}

/* taskbar */
.taskbar{width:62px;flex:none;background:#060606;display:flex;flex-direction:column;color:#fff;position:relative}
.ti{position:relative;display:flex;align-items:center;justify-content:center;flex:none;width:62px}
.t39{height:40px}.t40{height:42px;padding-bottom:3px}.t47{height:47px}.t46{height:46px}
.t-last{margin-top:2px}
.run::after,.run2::after,.act::after{content:"";position:absolute;right:0;top:4px;bottom:4px;width:2px;background:#9dc8ea}
.run2::after{width:4px}
.act{background:#3b3b3b;margin-left:4px;width:58px;padding-right:4px}
.act::after{top:0;bottom:0}
.svg-p{font:700 11px "Liberation Sans",sans-serif;fill:#fff}
.svg-w{font:700 11px "Liberation Sans",sans-serif;fill:#fff}
.tray{margin-top:auto;display:flex;flex-direction:column;align-items:center;padding-bottom:13px;font-size:11.500px;line-height:17px}
.tr-chev{align-self:flex-start;margin:18px 0 0 14px}
.tr-net{display:flex;gap:6px;margin-top:12px;align-items:center}
.tr-txt{text-align:center;color:#eee;white-space:nowrap}
.lang{margin-top:5px}
.date{margin-top:11px;font-size:11.400px}
.tr-note{position:relative;width:30px;height:30px;margin-top:13px;padding:4px 0 0 6px}
.badge{position:absolute;right:-3px;bottom:0;width:16px;height:16px;border-radius:50%;background:#3a3a3a;border:1px solid #888;font-size:11px;font-weight:700;line-height:14px;text-align:center;color:#fff}
```
